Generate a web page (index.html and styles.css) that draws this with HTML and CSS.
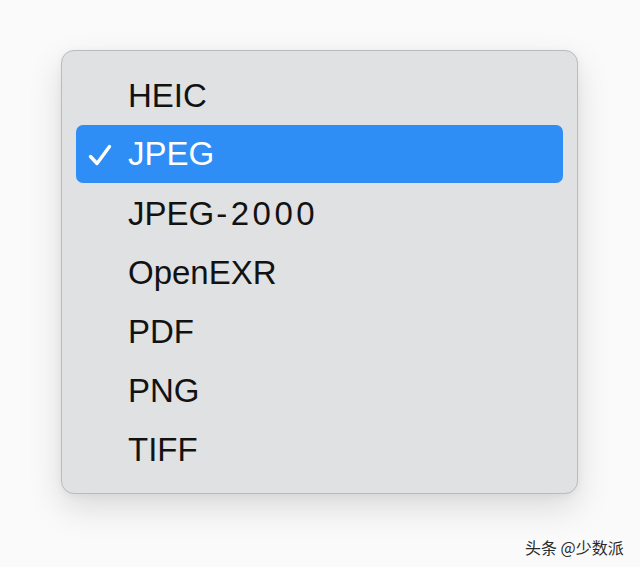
FILE: index.html
```html
<!DOCTYPE html>
<html lang="zh-CN">
<head>
    <meta charset="UTF-8">
    <title>Format Menu</title>
    <link rel="stylesheet" href="styles.css">
</head>
<body>
    <div class="stage">
        <ul class="menu">
            <li class="menu-item">HEIC</li>
            <li class="menu-item selected">
                <svg class="check" viewBox="0 0 24 22" width="24" height="22">
                    <path d="M2.5 12.5 L9 19.5 L21.5 2.5" fill="none" stroke="#fff" stroke-width="3.4" stroke-linecap="round" stroke-linejoin="round"/>
                </svg>
                JPEG
            </li>
            <li class="menu-item">JPEG<span class="digits">-2000</span></li>
            <li class="menu-item">OpenEXR</li>
            <li class="menu-item">PDF</li>
            <li class="menu-item">PNG</li>
            <li class="menu-item">TIFF</li>
        </ul>
    </div>
    <div class="watermark">头条 @少数派</div>
</body>
</html>
```

FILE: styles.css
```css
html, body {
    margin: 0;
    height: 100%;
}
body {
    font-family: "Liberation Sans", Arial, sans-serif;
    background: #fafafa;
    position: relative;
    overflow: hidden;
}
.stage {
    padding: 50px 0 0 61px;
}
.menu {
    list-style: none;
    margin: 0;
    width: 487px;
    padding: 15px 14px 14px;
    background: #dfe1e2;
    border: 1px solid #b9bbbc;
    border-radius: 13px;
    box-shadow: 0 14px 34px rgba(0,0,0,0.13), 0 2px 8px rgba(0,0,0,0.05);
}
.menu-item {
    position: relative;
    height: 59px;
    line-height: 59px;
    padding-left: 52px;
    font-size: 33px;
    color: #121212;
    border-radius: 7px;
}
.menu-item.selected {
    height: 58px;
    line-height: 58px;
    margin-bottom: 1px;
    background: #2e8ef6;
    color: #fff;
}
.digits {
    letter-spacing: 3.5px;
    margin-left: 2px;
}
.check {
    position: absolute;
    left: 12px;
    top: 19px;
}
.watermark {
    position: absolute;
    left: 525px;
    top: 535px;
    font-family: "Noto Sans CJK SC", sans-serif;
    font-size: 16px;
    color: #2a2a2a;
    text-shadow: 0 0 2px #fff;
}
```
